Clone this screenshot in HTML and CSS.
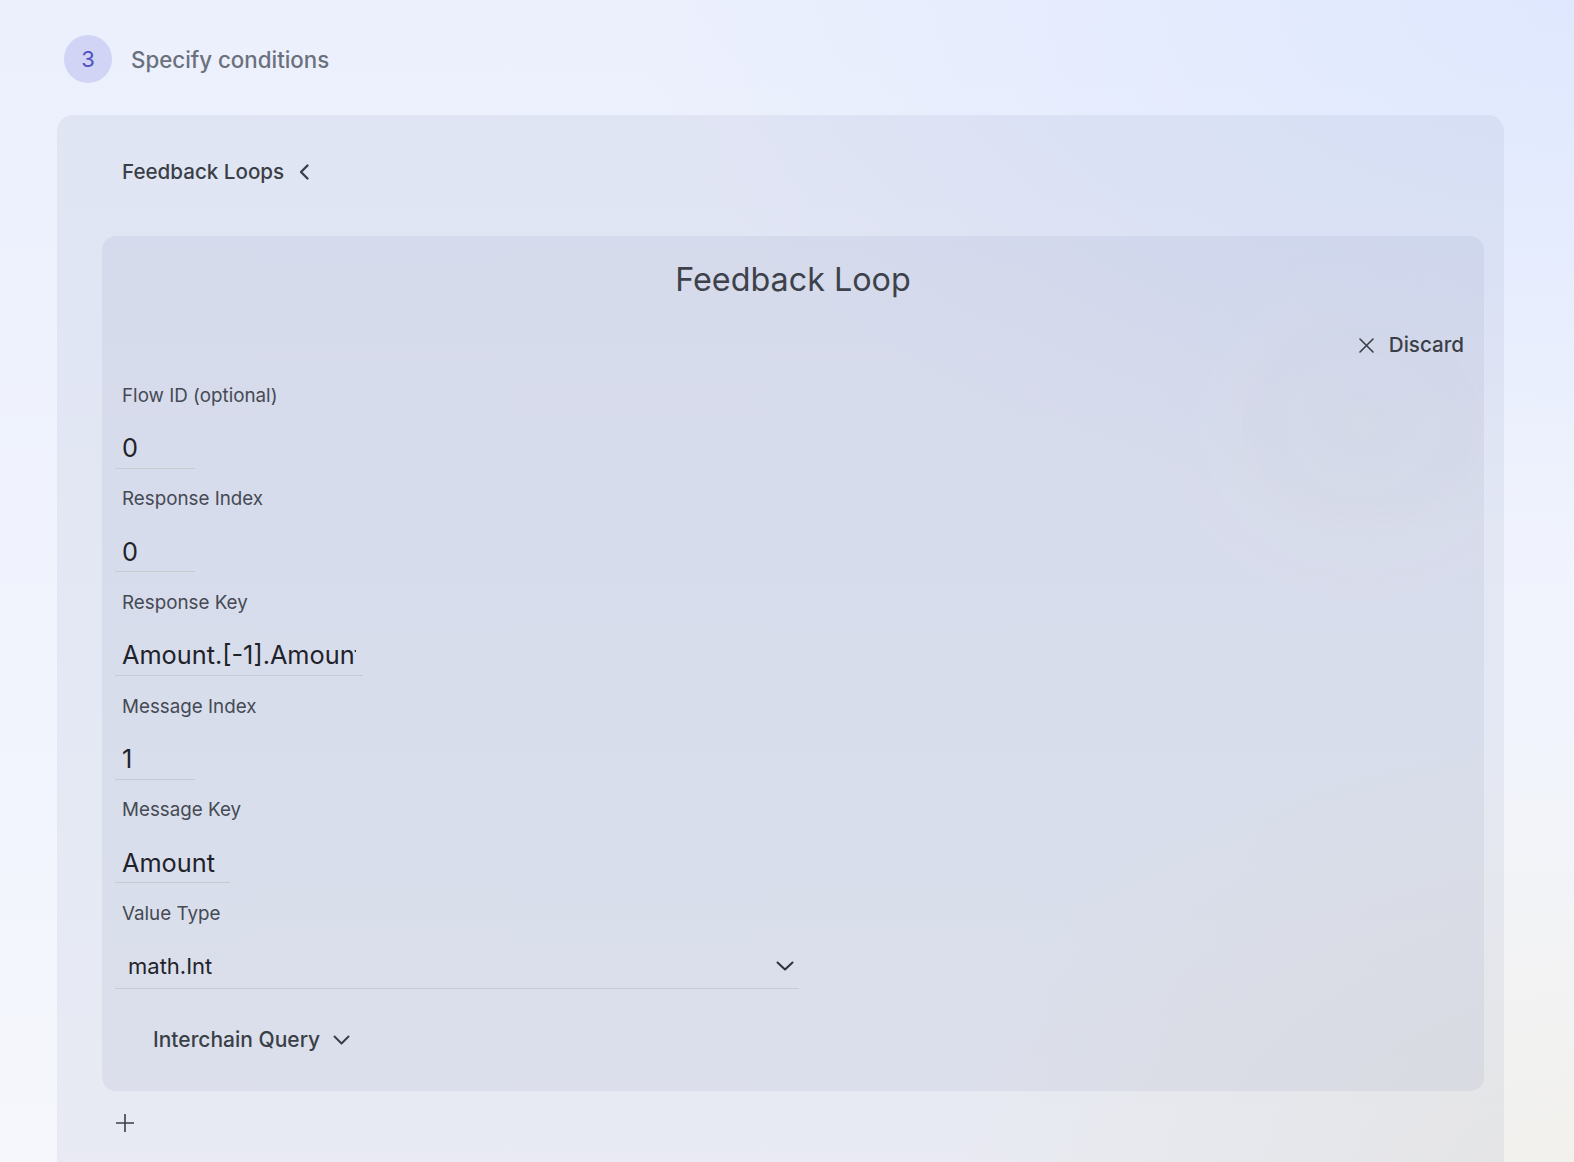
FILE: index.html
```html
<!DOCTYPE html>
<html lang="en">
<head>
<meta charset="utf-8">
<title>Specify conditions</title>
<link rel="stylesheet" href="styles.css">
</head>
<body>
<div class="page">
  <div class="step">
    <span class="step-num">3</span>
    <span class="step-title">Specify conditions</span>
  </div>

  <section class="panel">
    <div class="panel-head">
      <span>Feedback Loops</span>
      <svg class="chev-left" width="12" height="18" viewBox="0 0 12 18" aria-hidden="true"><path d="M9.5 2.5 L3 9 L9.5 15.5" fill="none" stroke="#3a3f47" stroke-width="2.4" stroke-linecap="round" stroke-linejoin="round"/></svg>
    </div>

    <div class="loop-card">
      <h2 class="loop-title">Feedback Loop</h2>

      <div class="discard-row">
        <button class="discard" type="button">
          <svg width="15" height="15" viewBox="0 0 15 15" aria-hidden="true"><path d="M1 1 L14 14 M14 1 L1 14" fill="none" stroke="#3a3f47" stroke-width="1.6" stroke-linecap="round"/></svg>
          <span>Discard</span>
        </button>
      </div>

      <div class="field">
        <label class="field-label">Flow ID (optional)</label>
        <input class="field-input w-sm" type="text" value="0">
      </div>
      <div class="field">
        <label class="field-label">Response Index</label>
        <input class="field-input w-sm" type="text" value="0">
      </div>
      <div class="field">
        <label class="field-label">Response Key</label>
        <input class="field-input w-lg" type="text" value="Amount.[-1].Amount">
      </div>
      <div class="field">
        <label class="field-label">Message Index</label>
        <input class="field-input w-sm" type="text" value="1">
      </div>
      <div class="field">
        <label class="field-label">Message Key</label>
        <input class="field-input w-md" type="text" value="Amount">
      </div>
      <div class="field field-last">
        <label class="field-label">Value Type</label>
        <div class="select">
          <span>math.Int</span>
          <svg width="18" height="10" viewBox="0 0 18 10" aria-hidden="true"><path d="M1.5 1.5 L9 8.5 L16.5 1.5" fill="none" stroke="#2c3038" stroke-width="2" stroke-linecap="round" stroke-linejoin="round"/></svg>
        </div>
      </div>

      <button class="ic-query" type="button">
        <span>Interchain Query</span>
        <svg width="17" height="10" viewBox="0 0 17 10" aria-hidden="true"><path d="M1.5 1.5 L8.5 8.5 L15.5 1.5" fill="none" stroke="#3a3f47" stroke-width="2" stroke-linecap="round" stroke-linejoin="round"/></svg>
      </button>
    </div>

    <button class="add" type="button" aria-label="Add">
      <svg width="20" height="20" viewBox="0 0 20 20" aria-hidden="true"><path d="M10 1 V19 M1 10 H19" fill="none" stroke="#3a3f47" stroke-width="1.6"/></svg>
    </button>
  </section>
</div>
</body>
</html>
```

FILE: styles.css
```css
* { box-sizing: border-box; }

html, body {
  margin: 0;
  min-height: 100%;
}

body {
  font-family: Inter, "Noto Sans", sans-serif;
  color: #3a3f47;
  min-height: 1162px;
  overflow: hidden;
  background:
    radial-gradient(ellipse 60% 45% at 100% 0%, #dfe8fe 0%, rgba(223, 232, 254, 0) 100%),
    radial-gradient(ellipse 40% 40% at 100% 100%, #f1f0ec 0%, rgba(241, 240, 236, 0) 100%),
    linear-gradient(180deg, #ecf0fd 0%, #f2f5fd 70%, #f6f7fc 100%);
}

.page {
  padding: 35px 70px 0 57px;
}

.step {
  display: flex;
  align-items: center;
  gap: 19px;
  padding-left: 7px;
}

.step-num {
  width: 48px;
  height: 48px;
  border-radius: 50%;
  background: #d1d4f4;
  color: #4d51c2;
  font-size: 22px;
  display: flex;
  align-items: center;
  justify-content: center;
}

.step-title {
  font-size: 22.3px;
  font-weight: 500;
  color: #6b717c;
}

.panel {
  margin-top: 32px;
  border-radius: 16px 16px 0 0;
  background: rgba(118, 130, 162, 0.1);
  padding: 0 20px 60px 45px;
}

.panel-head {
  display: flex;
  align-items: center;
  padding: 43px 0 50px 20px;
  font-size: 20.6px;
  line-height: 28px;
  font-weight: 500;
  color: #3a3f47;
}

.chev-left {
  margin-left: 14px;
}

.loop-card {
  border-radius: 14px;
  background:
    radial-gradient(ellipse 200px 180px at 1260px 190px, rgba(205, 205, 200, 0.10) 0%, rgba(205, 205, 200, 0.05) 45%, rgba(205, 205, 200, 0) 100%),
    rgba(118, 130, 162, 0.1);
  padding: 24px 20px 37px 13px;
}

.loop-title {
  margin: 0 -20px 0 -13px;
  text-align: center;
  font-size: 32.3px;
  line-height: 40px;
  font-weight: 400;
  color: #3d424a;
}

.discard-row {
  display: flex;
  justify-content: flex-end;
  margin-top: 31px;
}

.discard {
  display: flex;
  align-items: center;
  gap: 15px;
  border: 0;
  background: none;
  padding: 0;
  font-family: inherit;
  font-size: 20.6px;
  line-height: 28px;
  font-weight: 500;
  color: #3a3f47;
}

.field {
  display: flex;
  flex-direction: column;
  align-items: flex-start;
  margin-bottom: 17.7px;
}

.discard-row + .field {
  margin-top: 23.6px;
}

.field-label {
  padding-left: 7px;
  font-size: 18.8px;
  line-height: 26px;
  color: #454a53;
  margin-bottom: 14px;
}

.field-input {
  border: 0;
  border-bottom: 1px solid #c8cbd1;
  background: transparent;
  font-family: inherit;
  font-size: 25.3px;
  line-height: 32px;
  height: 46px;
  padding: 9px 7px 4px;
  color: #1f2329;
  outline: none;
}

.w-sm { width: 80px; }
.w-md { width: 115px; }
.w-lg { width: 248px; }

.field-last {
  margin-bottom: 0;
}

.select {
  display: flex;
  align-items: center;
  justify-content: space-between;
  width: 684px;
  padding: 10px 5px 7px 13px;
  font-size: 22px;
  line-height: 30px;
  color: #1f2329;
  border-bottom: 1px solid #c8cbd1;
}

.ic-query {
  display: flex;
  align-items: center;
  gap: 13px;
  margin: 37px 0 0 38px;
  border: 0;
  background: none;
  padding: 0;
  font-family: inherit;
  font-size: 21px;
  line-height: 28px;
  font-weight: 500;
  color: #3a3f47;
}

.add {
  display: block;
  margin: 22px 0 0 13px;
  border: 0;
  background: none;
  padding: 0;
  width: 20px;
  height: 20px;
}

.add svg {
  display: block;
}
```
